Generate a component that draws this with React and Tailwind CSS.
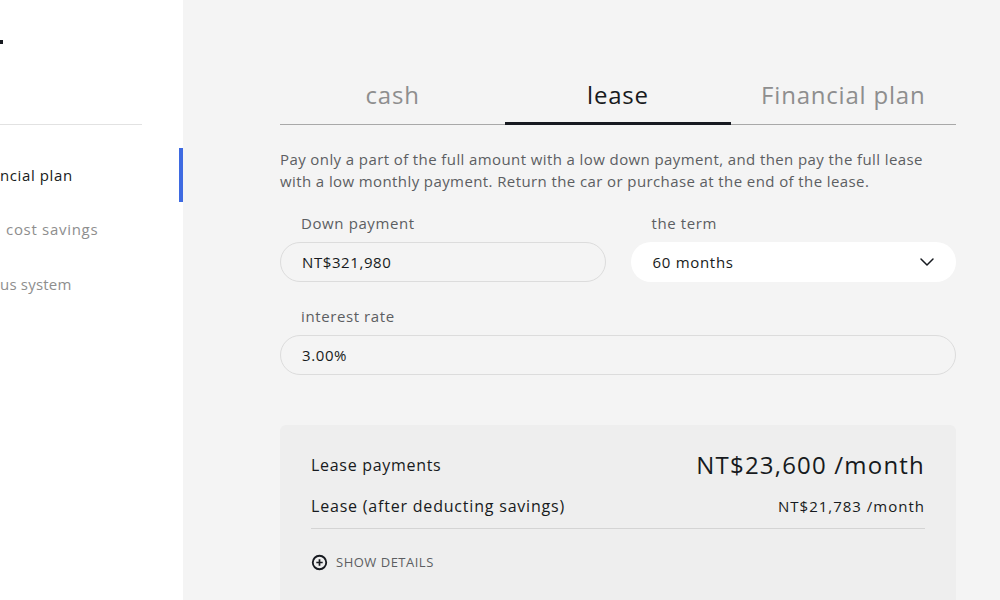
import React from "react";

const font = { fontFamily: '"Open Sans", "Liberation Sans", sans-serif' };

function Sidebar() {
  return (
    <div className="relative w-[183px] shrink-0 bg-white h-full overflow-hidden">
      <div className="absolute left-0 top-[40px] w-[3px] h-[4px] bg-[#171a20]" />
      <div className="pt-[124px]">
        <div className="h-px w-[142px] bg-[#e2e2e2]" />
        <div className="mt-[23px] relative h-[54px] flex items-center">
          <span className="text-[15px] tracking-[0.6px] text-[#171a20] leading-none">ncial plan</span>
          <div className="absolute right-0 top-0 h-[54px] w-[4px] bg-[#3e6ae1]" />
        </div>
        <div className="h-[54px] flex items-center pl-[6px]">
          <span className="text-[15px] tracking-[0.7px] text-[#8e8e8e] leading-none">cost savings</span>
        </div>
        <div className="h-[56px] flex items-center">
          <span className="text-[15px] tracking-[0.2px] text-[#8e8e8e] leading-none">us system</span>
        </div>
      </div>
    </div>
  );
}

function Tabs() {
  const tabs = ["cash", "lease", "Financial plan"];
  return (
    <div className="flex border-b border-[#a8a8a8] h-[55px]">
      {tabs.map((t) => (
        <div
          key={t}
          className={`flex-1 flex items-center justify-center pb-[4px] text-[24px] tracking-[0.8px] relative ${
            t === "lease" ? "text-[#171a20] font-medium" : "text-[#8e8e8e]"
          }`}
        >
          {t}
          {t === "lease" && (
            <div className="absolute left-0 right-0 bottom-[-1px] h-[3px] bg-[#171a20]" />
          )}
        </div>
      ))}
    </div>
  );
}

function Chevron() {
  return (
    <svg width="18" height="18" viewBox="0 0 24 24" fill="none" stroke="#171a20" strokeWidth="2" strokeLinecap="round" strokeLinejoin="round">
      <path d="M4 8l8 8 8-8" />
    </svg>
  );
}

function PlusCircle() {
  return (
    <svg width="17" height="17" viewBox="0 0 24 24" fill="none" stroke="#171a20" strokeWidth="2.6">
      <circle cx="12" cy="12" r="9.5" />
      <path d="M12 7.5v9M7.5 12h9" strokeWidth="2.4" />
    </svg>
  );
}

export default function App() {
  return (
    <div className="w-[1000px] h-[600px] flex overflow-hidden bg-[#f4f4f4]" style={font}>
      <Sidebar />
      <div className="flex-1 pl-[97px] pr-[44px] pt-[70px]">
        <Tabs />
        <p className="mt-[23px] text-[15px] leading-[22px] text-[#5c5e62] tracking-[0.4px]">
          Pay only a part of the full amount with a low down payment, and then pay the full lease with a low monthly payment. Return the car or purchase at the end of the lease.
        </p>
        <div className="mt-[21px] grid grid-cols-2 gap-x-[25px]">
          <div>
            <div className="pl-[21px] text-[15px] tracking-[0.6px] text-[#5c5e62] leading-[20px]">Down payment</div>
            <div className="mt-[9px] h-[40px] rounded-full border border-[#dcdcdc] flex items-center pl-[21px] text-[15px] tracking-[0.6px] text-[#171a20]">
              NT$321,980
            </div>
          </div>
          <div>
            <div className="pl-[21px] text-[15px] tracking-[0.6px] text-[#5c5e62] leading-[20px]">the term</div>
            <div className="mt-[9px] h-[40px] rounded-full bg-white flex items-center justify-between pl-[22px] pr-[20px] text-[15px] tracking-[0.7px] text-[#171a20]">
              <span>60 months</span>
              <Chevron />
            </div>
          </div>
        </div>
        <div className="mt-[24px]">
          <div className="pl-[21px] text-[15px] tracking-[0.6px] text-[#5c5e62] leading-[20px]">interest rate</div>
          <div className="mt-[9px] h-[40px] rounded-full border border-[#dcdcdc] flex items-center pl-[21px] text-[15px] tracking-[0.6px] text-[#171a20]">
            3.00%
          </div>
        </div>
        <div className="mt-[50px] bg-[#eeeeee] rounded-[6px] px-[31px] pt-[26px] h-[200px]">
          <div className="flex items-center justify-between h-[28px]">
            <span className="text-[16px] tracking-[0.7px] font-medium text-[#171a20]">Lease payments</span>
            <span className="text-[24px] tracking-[1.2px] text-[#171a20]">NT$23,600 /month</span>
          </div>
          <div className="flex items-center justify-between mt-[16px] h-[22px]">
            <span className="text-[16px] tracking-[0.8px] text-[#171a20]">Lease (after deducting savings)</span>
            <span className="text-[15px] tracking-[1px] text-[#171a20]">NT$21,783 /month</span>
          </div>
          <div className="mt-[11px] h-px bg-[#d4d4d4]" />
          <div className="mt-[24px] flex items-center gap-[8px]">
            <PlusCircle />
            <span className="text-[13px] tracking-[0.5px] text-[#5c5e62]">SHOW DETAILS</span>
          </div>
        </div>
      </div>
    </div>
  );
}
